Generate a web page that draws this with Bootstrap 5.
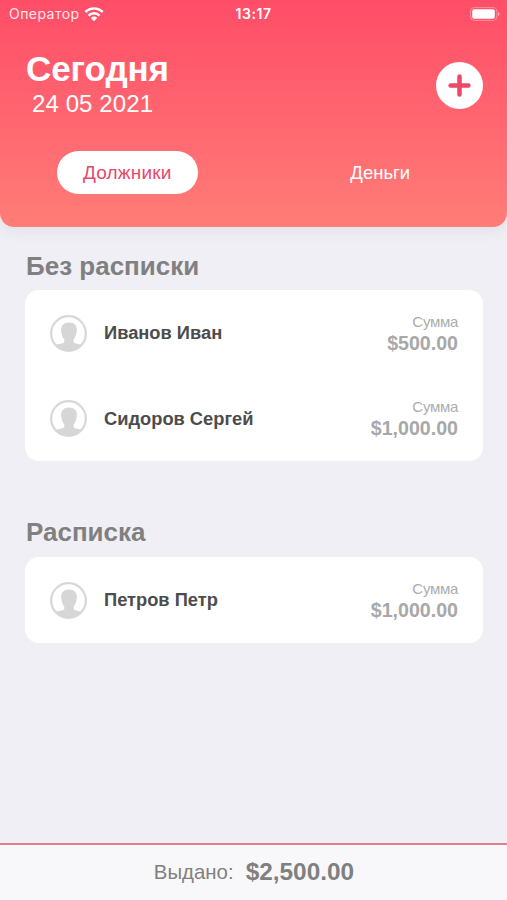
<!DOCTYPE html>
<html lang="ru">
<head>
<meta charset="utf-8">
<meta name="viewport" content="width=device-width, initial-scale=1">
<title>Должники</title>
<link href="https://cdn.jsdelivr.net/npm/bootstrap@5.3.0/dist/css/bootstrap.min.css" rel="stylesheet">
<style>
body{font-family:"Liberation Sans",Arial,sans-serif;background:#f0eff5;line-height:1}
.app{height:900px;overflow:hidden}
.top-panel{height:227px;border-radius:0 0 14px 14px;background:linear-gradient(#ff4d68,#ff7d77);box-shadow:0 5px 14px rgba(60,60,90,.07)}
.status{height:28px;padding:0 7px 0 9px;font-family:Inter,sans-serif;font-size:14px}
.carrier{letter-spacing:.45px;opacity:.85}
.clock{letter-spacing:.55px;padding-right:2px}
.title{font-size:35px;line-height:42px;letter-spacing:-.1px;margin-bottom:0}
.date{font-size:24px;line-height:28px;padding-left:6px;letter-spacing:.1px}
.heading{padding:20px 24px 0 26px;height:111px}
.add{width:47px;height:47px;margin-top:14px}
.tab{width:141px;height:43px;font-size:18.5px;line-height:1;padding:1px 0 0}
.tab-on{color:#e9476d;font-size:19px;letter-spacing:.2px;padding:0 0 1px}
.tab-on-cell{padding-left:1px}
.body-pane{padding:0 24px 0 25px}
.section-title{font-size:26px;line-height:31px;color:#808080;padding-left:1px}
.panel{border-radius:14px}
.debtor{height:85.5px;padding:1px 25px 0}
.avatar{width:37px;height:37px;margin-right:17px}
.name{font-size:18.3px;color:#4c4c4c}
.sum-label{font-size:15px;line-height:19px;color:#adadad;letter-spacing:-.3px}
.sum{font-size:19.6px;line-height:24px;color:#a8a8a8}
.section-gap{margin-bottom:48px}
.section-gap + section .section-title{margin-bottom:9px}
.total{height:57px;border-top:2px solid #e37e91;background:#f8f8fa;color:#808080;font-size:20.4px;padding-left:1px}
.total strong{font-size:24.4px}
</style>
</head>
<body>
<svg width="0" height="0" class="position-absolute"><defs>
<symbol id="person" viewBox="0 0 36 36"><circle cx="18" cy="18" r="16.900" fill="#fff" stroke="#d8d8d8" stroke-width="2.200"/><path fill="#d6d6d6" d="M18.500 7.300c-5.200 0-8 3-7.600 8 .2 3.500 1.400 6.500 3 8.500v2.700c-1.500 1.500-5.500 1.300-8.700 2.700A16.800 16.800 0 0 0 18 35a16.800 16.800 0 0 0 12.800-5.800c-3.200-1.400-6.300-1.200-7.800-2.700v-2.700c1.700-2 2.900-5 3.100-8.500.4-5-2.400-8-7.600-8z"/></symbol>
</defs></svg>
<div class="app d-flex flex-column">
  <header class="top-panel text-white flex-shrink-0">
    <div class="status row g-0 align-items-center">
      <div class="col d-flex align-items-center"><span class="carrier">Оператор</span>
        <svg class="ms-1" width="20" height="15" viewBox="0 0 18 14" fill="none" stroke="#fff" stroke-width="2.400"><path d="M.9 4.700a11.500 11.500 0 0 1 16.200 0M3.900 8a7.200 7.200 0 0 1 10.200 0"/><path fill="#fff" stroke="none" d="M9 13.200l-3-3a4.200 4.200 0 0 1 6 0z"/></svg>
      </div>
      <div class="col-auto fw-semibold clock">13:17</div>
      <div class="col d-flex justify-content-end">
        <svg width="30" height="14" viewBox="0 0 30 14"><rect x=".6" y=".6" width="26.300" height="12.800" rx="4" fill="none" stroke="#fff" stroke-opacity=".35"/><rect x="2.200" y="2.200" width="22.600" height="9.600" rx="2" fill="#fff"/><path d="M28 5v4c2-.6 2-3.400 0-4z" fill="#fff" fill-opacity=".5"/></svg>
      </div>
    </div>
    <div class="heading d-flex justify-content-between">
      <div><h1 class="title fw-bold">Сегодня</h1><div class="date">24 05 2021</div></div>
      <button class="add btn p-0 border-0 bg-white rounded-circle d-flex align-items-center justify-content-center" aria-label="Добавить"><svg width="23" height="23" viewBox="0 0 23 23" stroke="#ee4866" stroke-width="4.500" stroke-linecap="round"><path d="M11.500 2.600v17.800M2.600 11.500h17.800"/></svg></button>
    </div>
    <nav class="row g-0 pt-2 mt-1">
      <div class="tab-on-cell col-6 d-flex justify-content-center"><button class="tab tab-on btn border-0 rounded-pill bg-white">Должники</button></div>
      <div class="col-6 d-flex justify-content-center"><button class="tab btn border-0 text-white">Деньги</button></div>
    </nav>
  </header>
  <main class="body-pane flex-grow-1">
    <section class="pt-4 section-gap">
      <h2 class="section-title fw-bold">Без расписки</h2>
      <div class="panel bg-white">
        <div class="debtor d-flex align-items-center"><svg class="avatar"><use href="#person"/></svg><span class="name fw-bold">Иванов Иван</span><div class="ms-auto text-end"><div class="sum-label">Сумма</div><div class="sum fw-bold">$500.00</div></div></div>
        <div class="debtor d-flex align-items-center"><svg class="avatar"><use href="#person"/></svg><span class="name fw-bold">Сидоров Сергей</span><div class="ms-auto text-end"><div class="sum-label">Сумма</div><div class="sum fw-bold">$1,000.00</div></div></div>
      </div>
    </section>
    <section class="pt-2">
      <h2 class="section-title fw-bold">Расписка</h2>
      <div class="panel bg-white">
        <div class="debtor d-flex align-items-center"><svg class="avatar"><use href="#person"/></svg><span class="name fw-bold">Петров Петр</span><div class="ms-auto text-end"><div class="sum-label">Сумма</div><div class="sum fw-bold">$1,000.00</div></div></div>
      </div>
    </section>
  </main>
  <footer class="total flex-shrink-0 d-flex align-items-center justify-content-center gap-2"><span class="me-1">Выдано:</span><strong>$2,500.00</strong></footer>
</div>
<script src="https://cdn.jsdelivr.net/npm/bootstrap@5.3.0/dist/js/bootstrap.bundle.min.js"></script>
</body>
</html>
